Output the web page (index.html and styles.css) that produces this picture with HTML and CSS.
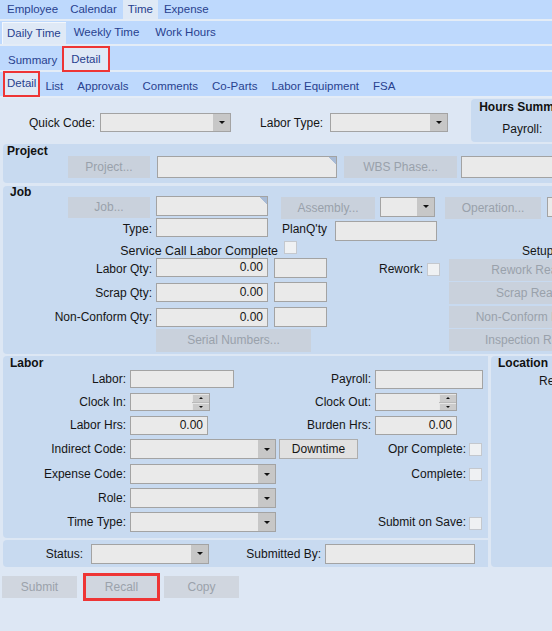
FILE: index.html
```html
<!DOCTYPE html>
<html>
<head>
<meta charset="utf-8">
<title>Daily Time Detail</title>
<link rel="stylesheet" href="styles.css">
</head>
<body>
<nav class="bar bar1">
  <span class="tab">Employee</span>
  <span class="tab">Calendar</span>
  <span class="tab sel">Time</span>
  <span class="tab">Expense</span>
</nav>
<nav class="bar bar2">
  <span class="tab sel">Daily Time</span>
  <span class="tab">Weekly Time</span>
  <span class="tab">Work Hours</span>
</nav>
<nav class="bar bar3">
  <span class="tab">Summary</span>
  <span class="tab sel">Detail</span>
</nav>
<nav class="bar bar4">
  <span class="tab sel">Detail</span>
  <span class="tab">List</span>
  <span class="tab">Approvals</span>
  <span class="tab">Comments</span>
  <span class="tab">Co-Parts</span>
  <span class="tab">Labor Equipment</span>
  <span class="tab">FSA</span>
</nav>

<section class="top">
  <div class="qc-row">
    <span class="lbl">Quick Code:</span>
    <span class="field combo c-quick"><span class="drop"></span></span>
    <span class="lbl l-ltype">Labor Type:</span>
    <span class="field combo c-ltype"><span class="drop"></span></span>
  </div>
  <div class="group hours">
    <div class="gtitle gt-hours">Hours Summary</div>
    <div class="hours-line">Payroll:</div>
  </div>
</section>

<section class="group project">
  <div class="gtitle gt-project">Project</div>
  <div class="row prow">
    <span class="btn b-project">Project...</span>
    <span class="field flag f-project"></span>
    <span class="btn b-wbs">WBS Phase...</span>
    <span class="field f-wbs"></span>
  </div>
</section>

<section class="group job">
  <div class="gtitle gt-job">Job</div>
  <div class="row jr1">
    <span class="btn b-job">Job...</span>
    <span class="field flag f-job"></span>
    <span class="btn b-asm">Assembly...</span>
    <span class="field combo c-asm"><span class="drop"></span></span>
    <span class="btn b-opr">Operation...</span>
    <span class="field f-opr"></span>
  </div>
  <div class="row jr2">
    <span class="lbl l-job">Type:</span>
    <span class="field f-jobw"></span>
    <span class="lbl l-plan">PlanQ'ty</span>
    <span class="field f-plan"></span>
  </div>
  <div class="row jr3">
    <span class="lbl l-svc">Service Call Labor Complete</span>
    <span class="chk c-svc"></span>
    <span class="lbl l-setup">Setup</span>
  </div>
  <div class="row jr4">
    <span class="lbl l-job">Labor Qty:</span>
    <span class="field num f-jobw">0.00</span>
    <span class="field f-small"></span>
    <span class="lbl l-rework">Rework:</span>
    <span class="chk c-rework"></span>
    <span class="btn b-right b-r1">Rework Reason...</span>
  </div>
  <div class="row jr5">
    <span class="lbl l-job">Scrap Qty:</span>
    <span class="field num f-jobw">0.00</span>
    <span class="field f-small"></span>
    <span class="btn b-right b-r2">Scrap Reason...</span>
  </div>
  <div class="row jr6">
    <span class="lbl l-job">Non-Conform Qty:</span>
    <span class="field num f-jobw">0.00</span>
    <span class="field f-small"></span>
    <span class="btn b-right b-r2">Non-Conform Reason...</span>
  </div>
  <div class="row jr7">
    <span class="btn b-serial">Serial Numbers...</span>
    <span class="btn b-right b-r3">Inspection Results...</span>
  </div>
</section>

<div class="lower">
  <div class="leftcol">
    <section class="group labor">
      <div class="gtitle gt-labor">Labor</div>
      <div class="lrow lr1">
        <span class="lbl l-lab">Labor:</span>
        <span class="field f-labor"></span>
        <span class="lbl l-pay">Payroll:</span>
        <span class="field f-payroll"></span>
      </div>
      <div class="lrow lr2">
        <span class="lbl l-lab">Clock In:</span>
        <span class="field spin s-in"><span class="spinbtns"><i class="up"></i><i class="dn"></i></span></span>
        <span class="lbl l-cout">Clock Out:</span>
        <span class="field spin s-out"><span class="spinbtns"><i class="up"></i><i class="dn"></i></span></span>
      </div>
      <div class="lrow lr3">
        <span class="lbl l-lab">Labor Hrs:</span>
        <span class="field num f-lhrs">0.00</span>
        <span class="lbl l-burden">Burden Hrs:</span>
        <span class="field num f-bhrs">0.00</span>
      </div>
      <div class="lrow lr4">
        <span class="lbl l-lab">Indirect Code:</span>
        <span class="field combo c-labor"><span class="drop"></span></span>
        <span class="btn-std">Downtime</span>
        <span class="lbl l-opr">Opr Complete:</span>
        <span class="chk c-lab"></span>
      </div>
      <div class="lrow lr5">
        <span class="lbl l-lab">Expense Code:</span>
        <span class="field combo c-labor"><span class="drop"></span></span>
        <span class="lbl l-comp">Complete:</span>
        <span class="chk c-lab"></span>
      </div>
      <div class="lrow lr6">
        <span class="lbl l-lab">Role:</span>
        <span class="field combo c-labor"><span class="drop"></span></span>
      </div>
      <div class="lrow lr7">
        <span class="lbl l-lab">Time Type:</span>
        <span class="field combo c-labor"><span class="drop"></span></span>
        <span class="lbl l-comp">Submit on Save:</span>
        <span class="chk c-lab"></span>
      </div>
    </section>
    <section class="group status">
      <span class="lbl l-status">Status:</span>
      <span class="field combo c-status"><span class="drop"></span></span>
      <span class="lbl l-subby">Submitted By:</span>
      <span class="field f-subby"></span>
    </section>
  </div>
  <section class="group location">
    <div class="gtitle gt-loc">Location</div>
    <div class="loc-line">Resource:</div>
  </section>
</div>

<div class="actions">
  <span class="btn act a-submit">Submit</span>
  <span class="btn act a-recall">Recall</span>
  <span class="btn act a-copy">Copy</span>
</div>
</body>
</html>
```

FILE: styles.css
```css
* { box-sizing: border-box; }
html, body { margin: 0; padding: 0; }
body {
  width: 552px;
  height: 631px;
  overflow: hidden;
  background: #dde7f4;
  font-family: "Liberation Sans", Arial, sans-serif;
  font-size: 12px;
  color: #151515;
}

/* ---------- tab bars ---------- */
.bar {
  display: flex;
  background: #bed9fd;
  border-bottom: 2px solid #e4ecf6;
  font-size: 11.5px;
  color: #28418f;
  white-space: nowrap;
}
.tab { flex-shrink: 0; }
.bar1 { height: 21px; }
.bar1 .tab { padding: 0 6px; line-height: 19px; }
.bar1 .tab:first-child { margin-left: 1px; }
.bar1 .sel { background: #dfe9f6; padding: 0 5px; }

.bar2 { height: 25px; }
.bar2 .tab { padding: 0 8px; line-height: 23px; }
.bar2 .sel {
  margin: 1px 0 0 2px;
  padding: 0 5px 0 4px;
  height: 22px;
  line-height: 21px;
  background: #dfe9f6;
  border-left: 1px solid #f3f7fc;
  border-top: 1px solid #f3f7fc;
}

.bar3 { height: 26px; align-items: flex-end; }
.bar3 .tab { padding: 0 7px; line-height: 20px; }
.bar3 .tab:first-child { margin-left: 1px; }
.bar3 .sel {
  line-height: 22px;
  height: 22px;
  background: #dfe9f6;
  outline: 2px solid #ee3535;
}

.bar4 { height: 26px; align-items: flex-end; }
.bar4 .tab { padding: 0 7px; line-height: 19px; }
.bar4 .sel {
  margin: 0 0 1px 5px;
  padding: 0 2px;
  height: 22px;
  line-height: 21px;
  background: #dfe9f6;
  outline: 2px solid #ee3535;
}

/* ---------- generic controls ---------- */
.lbl { flex-shrink: 0; white-space: nowrap; text-align: right; }
.field {
  display: block;
  flex-shrink: 0;
  height: 20px;
  background: #eaeaea;
  border: 1px solid #a3a3a3;
}
.num { text-align: right; padding-right: 4px; line-height: 17px; }
.flag {
  background: linear-gradient(to bottom left, #a8bbd6 50%, transparent 50%) top right / 8px 8px no-repeat, #eaeaea;
}
.combo { display: flex; justify-content: flex-end; }
.drop {
  width: 17px;
  height: 100%;
  background: #c7c7c7;
  display: flex;
  align-items: center;
  justify-content: center;
}
.drop::after {
  content: "";
  border-left: 3px solid transparent;
  border-right: 3px solid transparent;
  border-top: 3px solid #111;
}
.spin { display: flex; justify-content: flex-end; }
.spinbtns {
  width: 17px;
  height: 100%;
  display: flex;
  flex-direction: column;
  background: #b9b9b9;
  gap: 1px;
}
.spinbtns i {
  flex: 1;
  background: #cbcbcb;
  border-top: 1px solid #e6e6e6;
  border-left: 1px solid #e6e6e6;
  display: flex;
  align-items: center;
  justify-content: center;
}
.spinbtns .up::after {
  content: "";
  border-left: 2px solid transparent;
  border-right: 2px solid transparent;
  border-bottom: 2px solid #111;
}
.spinbtns .dn::after {
  content: "";
  border-left: 2px solid transparent;
  border-right: 2px solid transparent;
  border-top: 2px solid #111;
}
.chk {
  display: block;
  flex-shrink: 0;
  width: 13px;
  height: 13px;
  background: #eff1f3;
  border: 1px solid #c4c8ce;
}
.btn {
  display: block;
  flex-shrink: 0;
  height: 22px;
  line-height: 22px;
  text-align: center;
  background: #c9d1dc;
  color: #99a1ab;
  white-space: nowrap;
  overflow: hidden;
}
.btn-std {
  display: block;
  flex-shrink: 0;
  width: 79px;
  height: 20px;
  margin-left: 3px;
  line-height: 18px;
  text-align: center;
  background: #e1e1e1;
  border: 1px solid #adadad;
  color: #151515;
}

/* ---------- groups ---------- */
.group {
  background: #c8daf0;
  border-radius: 4px 0 0 4px;
}
.gtitle {
  font-weight: bold;
  color: #111;
  line-height: 12px;
  white-space: nowrap;
}
.row { display: flex; align-items: center; }

/* top area */
.top { display: flex; height: 46px; }
.qc-row {
  display: flex;
  align-items: center;
  height: 19px;
  margin: 15px 0 0 29px;
}
.c-quick { width: 131px; height: 19px; margin-left: 5px; }
.l-ltype { margin-left: 29px; }
.c-ltype { width: 118px; height: 19px; margin-left: 7px; }
.hours {
  flex-shrink: 0;
  width: 120px;
  height: 43px;
  margin: 1px 0 0 23px;
}
.gt-hours { padding: 2px 0 0 8px; }
.hours-line { margin-top: 9px; padding-left: 31px; line-height: 14px; }

/* project */
.project { margin-left: 3px; width: 600px; height: 39px; }
.gt-project { padding-left: 4px; height: 12px; padding-top: 1px; }
.prow { padding-left: 65px; height: 22px; align-items: flex-start; }
.b-project { width: 82px; }
.f-project { width: 180px; height: 22px; margin-left: 7px; }
.b-wbs { width: 113px; margin-left: 7px; }
.f-wbs { width: 120px; height: 22px; margin-left: 4px; }

/* job */
.job { margin: 3px 0 0 3px; width: 640px; height: 168px; }
.gt-job { padding: 0 0 0 7px; height: 10px; }
.jr1 { height: 22px; padding-left: 65px; }
.b-job { width: 82px; height: 21px; line-height: 21px; margin-top: 1px; }
.f-job { width: 112px; margin: 0 0 2px 6px; }
.b-asm { width: 94px; margin: 1px 0 0 13px; }
.c-asm { width: 55px; margin: 0 0 1px 5px; }
.b-opr { width: 96px; margin: 1px 0 0 10px; }
.f-opr { width: 60px; margin: 0 0 1px 6px; }

.jr2 { height: 21px; }
.l-job { width: 149px; }
.f-jobw { width: 112px; height: 19px; margin-left: 4px; }
.jr2 .f-jobw { margin-bottom: 2px; }
.l-plan { margin-left: 14px; }
.f-plan { width: 102px; margin: 4px 0 0 8px; }

.jr3 { height: 18px; }
.l-svc { width: 275px; margin-top: 5px; font-size: 12.4px; }
.c-svc { margin: 0 0 2px 6px; }
.l-setup { margin: 5px 0 0 225px; }

.jr4 { height: 24px; }
.jr5 { height: 24px; }
.jr6 { height: 23px; }
.jr7 { height: 24px; }
.f-small { width: 53px; height: 20px; margin-left: 6px; }
.jr4 .f-jobw, .jr4 .f-small { margin-bottom: 3px; }
.jr5 .f-jobw, .jr5 .f-small { margin-bottom: 2px; }
.jr6 .f-jobw, .jr6 .f-small { margin-top: 1px; }
.l-rework { margin-left: 52px; }
.c-rework { margin: 0 0 0 4px; }
.b-right { width: 180px; }
.b-r1 { margin: 2px 0 0 9px; }
.b-r2 { margin-left: 122px; }
.b-serial { width: 155px; height: 23px; margin-left: 153px; }
.b-r3 { margin-left: 138px; }

/* lower area */
.lower { display: flex; margin: 2px 0 0 3px; }
.leftcol { width: 485px; flex-shrink: 0; }
.labor { height: 182px; }
.gt-labor { padding: 1px 0 0 7px; height: 13px; }
.lrow { display: flex; align-items: center; height: 20px; }
.lr2, .lr3 { margin-top: 3px; }
.lr4 { margin-top: 4px; }
.lr5 { margin-top: 5px; }
.lr6, .lr7 { margin-top: 4px; }
.l-lab { width: 123px; margin-right: 4px; }
.f-labor { width: 104px; height: 18px; }
.l-pay { width: 137px; margin-right: 4px; }
.f-payroll { width: 108px; height: 19px; }
.s-in { width: 80px; height: 18px; }
.l-cout { width: 161px; margin-right: 4px; }
.s-out { width: 82px; height: 18px; }
.f-lhrs { width: 78px; height: 19px; }
.l-burden { width: 163px; margin-right: 4px; }
.f-bhrs { width: 82px; height: 19px; }
.c-labor { width: 146px; height: 20px; }
.l-opr { width: 108px; margin-right: 3px; }
.l-comp { width: 190px; margin-right: 3px; }
.lr4 .c-lab { margin-top: 1px; }
.lr7 .c-lab { margin-top: 3px; }

.status {
  display: flex;
  align-items: center;
  height: 27px;
  margin-top: 2px;
}
.l-status { width: 80px; margin-right: 8px; }
.c-status { width: 118px; height: 20px; }
.l-subby { width: 112px; margin-right: 4px; }
.f-subby { width: 150px; height: 20px; margin-top: 1px; }

.location {
  flex-shrink: 0;
  width: 80px;
  height: 211px;
  margin-left: 3px;
}
.gt-loc { padding: 1px 0 0 7px; height: 13px; }
.loc-line { margin-top: 5px; padding-left: 48px; line-height: 14px; white-space: nowrap; }

/* bottom actions */
.actions { display: flex; margin-top: 9px; padding-left: 2px; }
.act { background: #d0d6df; color: #9ba2ab; }
.a-submit { width: 75px; }
.a-recall { width: 71px; margin-left: 9px; outline: 3px solid #ee3535; }
.a-copy { width: 75px; margin-left: 7px; }
```
